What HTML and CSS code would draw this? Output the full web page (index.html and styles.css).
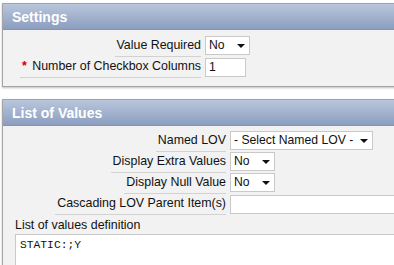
FILE: index.html
```html
<!DOCTYPE html>
<html lang="en">

<head>
    <meta charset="UTF-8">
    <title>Item Settings</title>
    <link rel="stylesheet" href="styles.css">
</head>

<body>
    <div class="region">
        <div class="region-head">Settings</div>
        <div class="region-body settings">
            <div class="row">
                <div class="lbl"><span>Value Required</span></div>
                <div class="select short"><span>No</span><i class="arrow"></i></div>
            </div>
            <div class="row">
                <div class="lbl"><span><b class="req">*</b> Number of Checkbox Columns</span></div>
                <div class="text small">1</div>
            </div>
        </div>
    </div>

    <div class="region">
        <div class="region-head">List of Values</div>
        <div class="region-body lov">
            <div class="row">
                <div class="lbl"><span>Named LOV</span></div>
                <div class="select long"><span>- Select Named LOV -</span><i class="arrow"></i></div>
            </div>
            <div class="row">
                <div class="lbl"><span>Display Extra Values</span></div>
                <div class="select short"><span>No</span><i class="arrow"></i></div>
            </div>
            <div class="row">
                <div class="lbl"><span>Display Null Value</span></div>
                <div class="select short"><span>No</span><i class="arrow"></i></div>
            </div>
            <div class="row">
                <div class="lbl"><span>Cascading LOV Parent Item(s)</span></div>
                <div class="text wide"></div>
            </div>
            <div class="def">
                <div class="def-lbl">List of values definition</div>
                <div class="area">STATIC:;Y</div>
            </div>
        </div>
    </div>
</body>

</html>
```

FILE: styles.css
```css
* {
    margin: 0;
    padding: 0;
    box-sizing: border-box;
}

body {
    background: #fff;
    font-family: "Liberation Sans", Arial, sans-serif;
    font-size: 12.4px;
    color: #111;
    padding: 3px 0 0 2px;
    overflow: hidden;
    width: 394px;
    height: 265px;
}

.region {
    width: 430px;
    border: 1px solid #a4a4a4;
    background: #f2f2f2;
    box-shadow: 0 1px 2px rgba(0, 0, 0, 0.25);
    margin-bottom: 12px;
}

.region-head {
    height: 26px;
    padding-left: 9px;
    line-height: 26px;
    font-size: 14px;
    font-weight: bold;
    color: #fff;
    background: linear-gradient(#b9c6dc, #8c9dbf);
    border-bottom: 1px solid #8393b3;
}

.settings {
    padding: 6px 0 8px 0;
}

.lov {
    padding: 5px 0 0 0;
}

.row {
    display: flex;
    align-items: flex-start;
    gap: 4px;
}

.lbl {
    height: 21px;
    text-align: right;
}

.lbl span {
    display: inline-block;
    height: 21px;
    line-height: 19px;
    padding-left: 2px;
    border-bottom: 1px solid #d2d2d2;
}

.settings .lbl {
    width: 198px;
}

.lov .lbl {
    width: 223px;
}

.req {
    color: #c00;
    font-weight: bold;
    margin-right: 2px;
}

.select,
.text {
    height: 19px;
    background: #fff;
    border: 1px solid #c9c9c9;
    line-height: 17px;
    padding-left: 3px;
    font-size: 12.2px;
    display: flex;
    align-items: center;
    justify-content: space-between;
}

.select .arrow {
    width: 0;
    height: 0;
    border-left: 4px solid transparent;
    border-right: 4px solid transparent;
    border-top: 4px solid #111;
    margin-right: 4px;
}

.short {
    width: 45px;
}

.long {
    width: 143px;
}

.small {
    width: 41px;
}

.wide {
    width: 200px;
}

.text {
    margin-top: 1px;
}

.def {
    padding: 2px 0 0 12px;
}

.def-lbl {
    height: 17px;
    line-height: 16px;
}

.area {
    height: 60px;
    background: #fff;
    border: 1px solid #c9c9c9;
    font-family: "Liberation Mono", "Courier New", monospace;
    font-size: 11.3px;
    padding: 4px 0 0 4px;
}
```
